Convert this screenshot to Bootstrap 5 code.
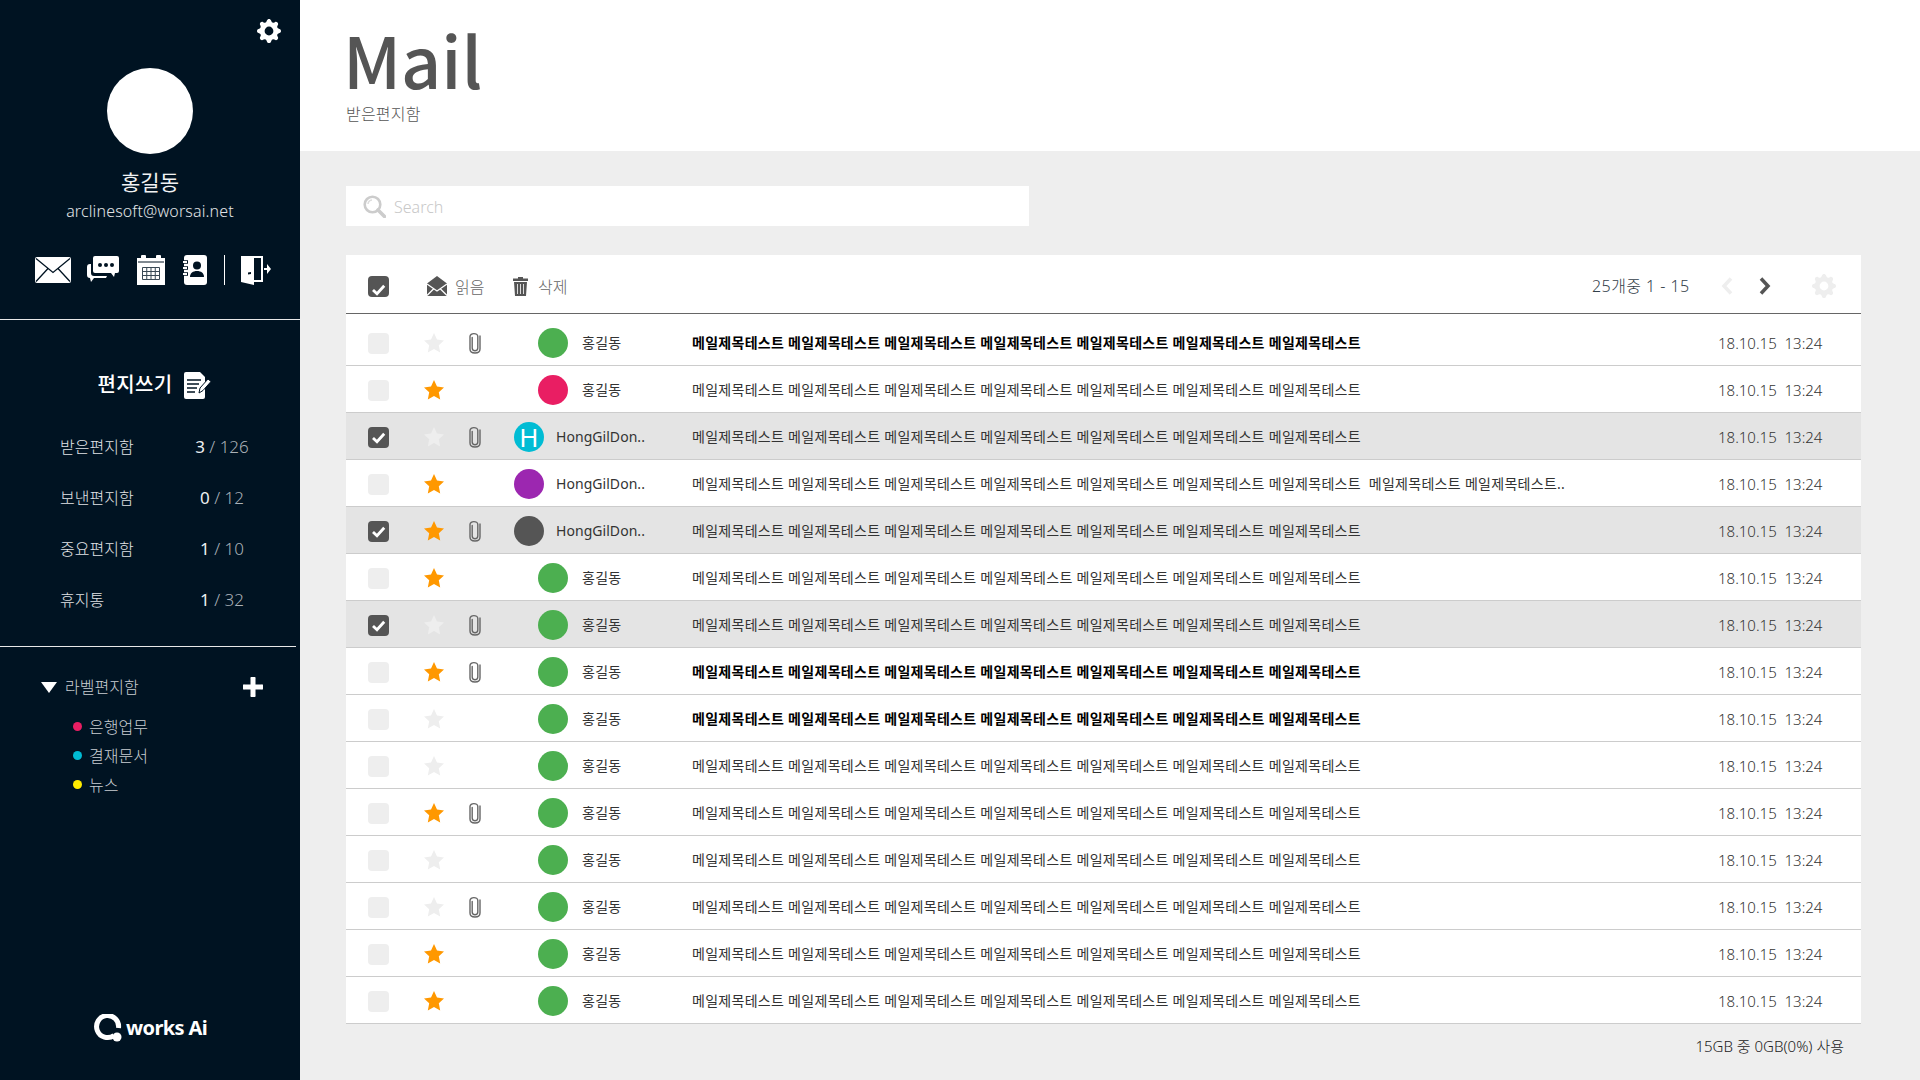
<!DOCTYPE html>
<html lang="ko">
<head>
<meta charset="UTF-8">
<title>Mail</title>
<link href="https://cdn.jsdelivr.net/npm/bootstrap@5.3.0/dist/css/bootstrap.min.css" rel="stylesheet">
<style>
body { font-family: "Noto Sans", "Noto Sans CJK KR", sans-serif; font-weight: 300; background: #eee; color: #444; height: 1080px; overflow: hidden; }
.side { width: 300px; height: 1080px; background: #001322; color: #e0e3e6; flex: none; }
.side-gear { height: 68px; padding: 19px 19px 0 0; }
.side-avatar { width: 86px; height: 86px; background: #fff; }
.side-name { font-size: 21px; line-height: 28px; margin-top: 14px; color: #f2f3f4; font-weight: 400; }
.side-mail { font-size: 16px; line-height: 24px; margin-top: 3px; letter-spacing: .14px; }
.side-icons { height: 30px; margin-top: 32px; margin-bottom: 34px; padding-left: 35px; }
.side-icons svg { margin-right: 18px; flex: none; }
.side-icons svg:first-child { margin-right: 16px; }
.side-icons svg.last-icon { margin-right: 0; }
.side-sep { width: 1px; height: 30px; background: #fff; margin: 0 16px 0 17px; }
.side-line { border-top: 1.5px solid #e8e8e8; }
.compose { height: 40px; margin-top: 45px; margin-bottom: 16px; font-size: 20px; font-weight: 500; color: #fff; gap: 11px; padding-left: 8px; letter-spacing: .4px; }
.box-row { height: 51px; padding-left: 60px; font-size: 16px; }
.box-name { width: 118px; }
.box-num { width: 88px; text-align: center; color: #aab1b7; font-size: 17px; }
.box-num b { font-weight: 400; color: #eef0f1; }
.box-end { margin-top: 21px; }
.label-head { margin-top: 25px; padding-left: 41px; height: 30px; font-size: 16px; color: #c9ced2; }
.label-list { margin-top: 10px; }
.label-item { height: 29px; padding-left: 73px; font-size: 16px; color: #c9ced2; }
.label-dot { width: 9px; height: 9px; margin-right: 7px; }
.label-add { margin-left: auto; margin-right: 37px; }
.brand { margin-top: auto; margin-bottom: 38px; padding-left: 94px; color: #fff; font-family: "Noto Sans", sans-serif; font-weight: 700; font-size: 20px; line-height: 28px; letter-spacing: -.6px; }
.main-top { height: 151px; background: #fff; padding: 17px 0 0 46px; }
.main-title { font-family: "Noto Sans CJK KR", "Noto Sans", sans-serif; font-size: 70px; line-height: 84px; font-weight: 500; color: #555; margin: 0 0 2px -3px; }
.main-sub { font-size: 16px; line-height: 22px; color: #555; letter-spacing: .2px; }
.main-body { padding: 35px 59px 0 46px; }
.search-box { width: 683px; height: 40px; background: #fff; padding-left: 17px; margin-bottom: 29px; }
.search-box input { border: 0; outline: 0; padding: 2px 0 0; margin-left: 8px; font-size: 16px; font-weight: 300; width: 500px; background: transparent; }
.search-box input::placeholder { color: #c8c8c8; }
.tool-bar { height: 59px; border-bottom: 1.5px solid #666; padding: 4px 0 0 22px; font-size: 16px; color: #666; }
.tool-label { padding-top: 2px; }
.tick { width: 21px; height: 21px; border-radius: 4px; background: #eee; flex: none; }
.tick.on { background: #555; }
.tool-read { margin-left: 38px; width: 86px; gap: 8px; }
.tool-del { gap: 10px; }
.tool-count { margin-left: auto; color: #33404a; font-size: 16px; width: 129px; letter-spacing: .45px; }
.tool-prev { width: 38px; }
.tool-next { width: 53px; }
.tool-gear { width: 49px; }
.mail-row { height: 47px; background: #fff; border-bottom: 1.5px solid #ccc; padding-left: 22px; font-size: 14px; }
.mail-row:first-of-type { height: 52px; padding-top: 5px; }
.mail-row.sel { background: #e4e4e4; }
.c-check { width: 56px; margin-top: 2px; }
.c-star { width: 45px; margin-top: 2px; }
.c-clip { width: 45px; margin-top: 2px; }
.c-from { width: 178px; color: #333; font-weight: 400; letter-spacing: .05px; }
.c-from.ko { padding-left: 24px; letter-spacing: .3px; }
.who { width: 30px; height: 30px; margin-top: 2px; margin-right: 12px; color: #fff; font-size: 26px; line-height: 30px; font-weight: 400; flex: none; }
.c-from.ko .who { margin-right: 14px; }
.c-subj { flex: 1 1 auto; color: #333; font-weight: 400; white-space: pre; letter-spacing: .29px; }
.mail-row.unread .c-subj { font-weight: 700; color: #000; }
.c-date { width: 143px; margin-top: 2px; font-size: 15px; color: #333; white-space: pre; }
.used { text-align: right; font-size: 15px; color: #222; padding: 11px 17px 0 0; }
</style>
</head>
<body class="d-flex">
<svg width="0" height="0" class="position-absolute">
  <symbol id="i-gear" viewBox="0 0 16 16"><path d="M9.405 1.05c-.413-1.4-2.397-1.4-2.81 0l-.1.34a1.464 1.464 0 0 1-2.105.872l-.31-.17c-1.283-.698-2.686.705-1.987 1.987l.169.311c.446.82.023 1.841-.872 2.105l-.34.1c-1.4.413-1.4 2.397 0 2.81l.34.1a1.464 1.464 0 0 1 .872 2.105l-.17.31c-.698 1.283.705 2.686 1.987 1.987l.311-.169a1.464 1.464 0 0 1 2.105.872l.1.34c.413 1.4 2.397 1.4 2.81 0l.1-.34a1.464 1.464 0 0 1 2.105-.872l.31.17c1.283.698 2.686-.705 1.987-1.987l-.169-.311a1.464 1.464 0 0 1 .872-2.105l.34-.1c1.4-.413 1.4-2.397 0-2.81l-.34-.1a1.464 1.464 0 0 1-.872-2.105l.17-.31c.698-1.283-.705-2.686-1.987-1.987l-.311.169a1.464 1.464 0 0 1-2.105-.872l-.1-.34zM8 10.93a2.929 2.929 0 1 1 0-5.86 2.929 2.929 0 0 1 0 5.858z"/></symbol>
  <symbol id="i-star" viewBox="0 0 20 20"><path d="M10 0l3 6.6 7 .8-5.2 4.8L16.2 19.5 10 16l-6.200 3.500 1.400-7.300L0 7.400l7-.8z"/></symbol>
  <symbol id="i-clip" viewBox="0 0 12 22"><path d="M3.200 5.500v10.500c0 3.600 5.600 3.600 5.600 0V4.500C8.800 0.600 1 0.600 1 4.500v12.500c0 5.300 10 5.300 10 0V4" fill="none" stroke="currentColor" stroke-width="1.400" stroke-linecap="round"/></symbol>
  <symbol id="i-tick" viewBox="0 0 21 21"><path d="M5 11l4 3.800 7.200-8" fill="none" stroke="#fff" stroke-width="2.800"/></symbol>
</svg>

<aside class="side d-flex flex-column">
  <div class="side-gear d-flex justify-content-end">
    <svg width="24" height="24" fill="#fff"><use href="#i-gear"/></svg>
  </div>
  <div class="side-avatar rounded-circle mx-auto"></div>
  <div class="side-name text-center">홍길동</div>
  <div class="side-mail text-center">arclinesoft@worsai.net</div>
  <div class="side-icons d-flex align-items-center">
    <svg width="36" height="26" viewBox="0 0 36 26"><rect width="36" height="26" rx="2" fill="#fff"/><path d="M1 1.500l17 14 17-14M1 24.500l12-13M35 24.500l-12-13" fill="none" stroke="#001322" stroke-width="1.300"/></svg>
    <svg width="32" height="28" viewBox="0 0 32 28"><path d="M8 0h22a2 2 0 0 1 2 2v13a2 2 0 0 1-2 2h-2l-1 4-3-4H8a2 2 0 0 1-2-2V2a2 2 0 0 1 2-2z" fill="#fff"/><path d="M4 8v9a3 3 0 0 0 3 3h13l-1 2H7l-3 4-1-4a3 3 0 0 1-3-3v-8a3 3 0 0 1 3-3z" fill="#fff"/><circle cx="13" cy="9" r="2" fill="#001322"/><circle cx="19" cy="9" r="2" fill="#001322"/><circle cx="25" cy="9" r="2" fill="#001322"/></svg>
    <svg width="28" height="30" viewBox="0 0 28 30"><rect y="3" width="28" height="27" fill="#fff"/><rect x="4" y="0" width="5" height="6" rx="1" fill="#fff"/><rect x="19" y="0" width="5" height="6" rx="1" fill="#fff"/><path d="M1 7h26" stroke="#001322"/><path d="M5.500 12.500h17v12h-17zM5.500 16.500h17M5.500 20.500h17M9.750 12.500v12M14 12.500v12M18.250 12.500v12" fill="none" stroke="#394855"/></svg>
    <svg width="24" height="30" viewBox="0 0 24 30" class="last-icon"><rect x="1" width="23" height="30" rx="3" fill="#fff"/><path d="M0 7h5M0 13h5M0 19h5" stroke="#001322" stroke-width="3.500"/><path d="M0 7h4M0 13h4M0 19h4" stroke="#fff" stroke-width="1.800"/><circle cx="14" cy="10.500" r="4" fill="#001322"/><path d="M7 22c0-4 3-6 7-6s7 2 7 6z" fill="#001322"/></svg>
    <span class="side-sep"></span>
    <svg width="30" height="30" viewBox="0 0 30 30" class="last-icon"><path d="M0 1h22v26h-9v3L0 27z" fill="#fff"/><path d="M13 3h7v22h-7z" fill="#001322"/><path d="M13 3L3 1h10zM13 3v24l-3-1V3z" fill="#fff"/><path d="M7 17.500l3-.5v2l-3 .5z" fill="#001322"/><path d="M23 13h3v-4l4 5-4 5v-4h-3z" fill="#fff"/></svg>
  </div>
  <div class="side-line"></div>

  <div class="compose d-flex justify-content-center align-items-center">
    <span>편지쓰기</span>
    <svg width="27" height="27" viewBox="0 0 27 27"><path d="M2 0h14l5 5v20a2 2 0 0 1-2 2H2a2 2 0 0 1-2-2V2a2 2 0 0 1 2-2z" fill="#fff"/><path d="M3 8h14M3 12h12M3 16h10M3 20h8" stroke="#001322" stroke-width="1.300"/><path d="M15 21l1-5 8-9 3 2.500-8 9z" fill="#fff" stroke="#001322"/></svg>
  </div>
  <div class="box-row d-flex align-items-center"><span class="box-name">받은편지함</span><span class="box-num"><b>3</b> / 126</span></div>
  <div class="box-row d-flex align-items-center"><span class="box-name">보낸편지함</span><span class="box-num"><b>0</b> / 12</span></div>
  <div class="box-row d-flex align-items-center"><span class="box-name">중요편지함</span><span class="box-num"><b>1</b> / 10</span></div>
  <div class="box-row d-flex align-items-center"><span class="box-name">휴지통</span><span class="box-num"><b>1</b> / 32</span></div>
  <div class="side-line me-1 box-end"></div>

  <div class="label-head d-flex align-items-center">
    <svg width="16" height="11" class="me-2" fill="#fff"><path d="M0 0h16l-8 11z"/></svg>
    <span>라벨편지함</span>
    <svg width="20" height="20" class="label-add" fill="#fff"><path d="M7.500 1.500a1 1 0 0 1 1-1.500h3a1 1 0 0 1 1 1.500v6h6a1 1 0 0 1 1.500 1v3a1 1 0 0 1-1.500 1h-6v6a1 1 0 0 1-1 1.500h-3a1 1 0 0 1-1-1.500v-6h-6A1 1 0 0 1 0 11.500v-3a1 1 0 0 1 1.500-1h6z"/></svg>
  </div>
  <div class="label-list">
    <div class="label-item d-flex align-items-center"><span class="label-dot rounded-circle" style="background:#e91e63"></span>은행업무</div>
    <div class="label-item d-flex align-items-center"><span class="label-dot rounded-circle" style="background:#00bcd4"></span>결재문서</div>
    <div class="label-item d-flex align-items-center"><span class="label-dot rounded-circle" style="background:#ffeb00"></span>뉴스</div>
  </div>

  <div class="brand d-flex align-items-center">
    <svg width="28" height="28" viewBox="0 0 28 28" class="me-1"><path d="M20 21.500A11 11 0 1 1 24.500 14" fill="none" stroke="#fff" stroke-width="5"/><circle cx="23" cy="23" r="4.500" fill="#fff"/></svg>
    <span>works Ai</span>
  </div>
</aside>

<main class="flex-grow-1">
  <div class="main-top">
    <h1 class="main-title">Mail</h1>
    <div class="main-sub">받은편지함</div>
  </div>
  <div class="main-body">
    <div class="search-box d-flex align-items-center">
      <svg width="23" height="23" viewBox="0 0 23 23"><circle cx="9.500" cy="9.500" r="7.800" fill="none" stroke="#ccc" stroke-width="2.600"/><path d="M15 15l6.500 6.500" stroke="#ccc" stroke-width="3.600" stroke-linecap="round"/><path d="M5 9a4.500 4.500 0 0 1 4-4" fill="none" stroke="#ddd" stroke-width="1.500"/></svg>
      <input type="text" placeholder="Search">
    </div>

    <div class="bg-white">
      <div class="tool-bar d-flex align-items-center">
        <span class="tick on"><svg width="21" height="21"><use href="#i-tick"/></svg></span>
        <span class="tool-read d-flex align-items-center">
          <svg width="20" height="20" viewBox="0 0 20 20"><path d="M10 0l10 7.500V20H0V7.500z" fill="#555"/><path d="M0 8l10 7 10-7M0 19.500l7-7M20 19.500l-7-7" fill="none" stroke="#fff" stroke-width="1.300"/></svg>
          <span class="tool-label">읽음</span>
        </span>
        <span class="tool-del d-flex align-items-center">
          <svg width="15" height="20" viewBox="0 0 15 20"><path d="M0 2.500h5V1h5v1.500h5V5H0zM1 6h13l-1 14H2z" fill="#555"/><path d="M4.500 8v10M7.500 8v10M10.500 8v10" stroke="#fff" stroke-width=".8"/></svg>
          <span class="tool-label">삭제</span>
        </span>
        <span class="tool-count">25개중 1 - 15</span>
        <span class="tool-prev"><svg width="12" height="18" viewBox="0 0 12 18" class="d-block"><path d="M10 1.500L3 9l7 7.500" fill="none" stroke="#eee" stroke-width="3.500"/></svg></span>
        <span class="tool-next"><svg width="12" height="18" viewBox="0 0 12 18" class="d-block"><path d="M2 1.500L9 9l-7 7.500" fill="none" stroke="#555" stroke-width="3.500"/></svg></span>
        <span class="tool-gear"><svg width="24" height="24" fill="#eee" class="d-block"><use href="#i-gear"/></svg></span>
      </div>
      <div id="mailList"></div>
    </div>
    <div class="used">15GB 중 0GB(0%) 사용</div>
  </div>
</main>

<script src="https://cdn.jsdelivr.net/npm/bootstrap@5.3.0/dist/js/bootstrap.bundle.min.js"></script>
<script>
  const subject = Array(7).fill("메일제목테스트").join(" ");
  const longSubject = subject + "  메일제목테스트 메일제목테스트..";
  const lat = "HongGilDon..";
  const ko = "홍길동";
  // sel, star, clip, unread, colour, name
  const mails = [
    [0, 0, 1, 1, "#4caf50", ko],
    [0, 1, 0, 0, "#e91e63", ko],
    [1, 0, 1, 0, "#00bcd4", lat, "H"],
    [0, 1, 0, 0, "#9c27b0", lat],
    [1, 1, 1, 0, "#555555", lat],
    [0, 1, 0, 0, "#4caf50", ko],
    [1, 0, 1, 0, "#4caf50", ko],
    [0, 1, 1, 1, "#4caf50", ko],
    [0, 0, 0, 1, "#4caf50", ko],
    [0, 0, 0, 0, "#4caf50", ko],
    [0, 1, 1, 0, "#4caf50", ko],
    [0, 0, 0, 0, "#4caf50", ko],
    [0, 0, 1, 0, "#4caf50", ko],
    [0, 1, 0, 0, "#4caf50", ko],
    [0, 1, 0, 0, "#4caf50", ko]
  ];
  document.getElementById("mailList").innerHTML = mails.map(function(m, i) {
    return `<div class="mail-row d-flex align-items-center ${m[0] ? "sel" : ""} ${m[3] ? "unread" : ""}">
      <div class="c-check"><span class="tick d-block ${m[0] ? "on" : ""}">${m[0] ? '<svg width="21" height="21" class="d-block"><use href="#i-tick"/></svg>' : ""}</span></div>
      <div class="c-star"><svg width="20" height="20" class="d-block" fill="${m[1] ? "#ff9800" : "#eee"}"><use href="#i-star"/></svg></div>
      <div class="c-clip">${m[2] ? '<svg width="12" height="22" class="d-block" color="#666"><use href="#i-clip"/></svg>' : ""}</div>
      <div class="c-from d-flex align-items-center ${m[5] === ko ? "ko" : ""}">
        <span class="who rounded-circle text-center" style="background:${m[4]}">${m[6] || ""}</span>${m[5]}
      </div>
      <div class="c-subj">${i === 3 ? longSubject : subject}</div>
      <div class="c-date">18.10.15  13:24</div>
    </div>`;
  }).join("");
</script>
</body>
</html>
